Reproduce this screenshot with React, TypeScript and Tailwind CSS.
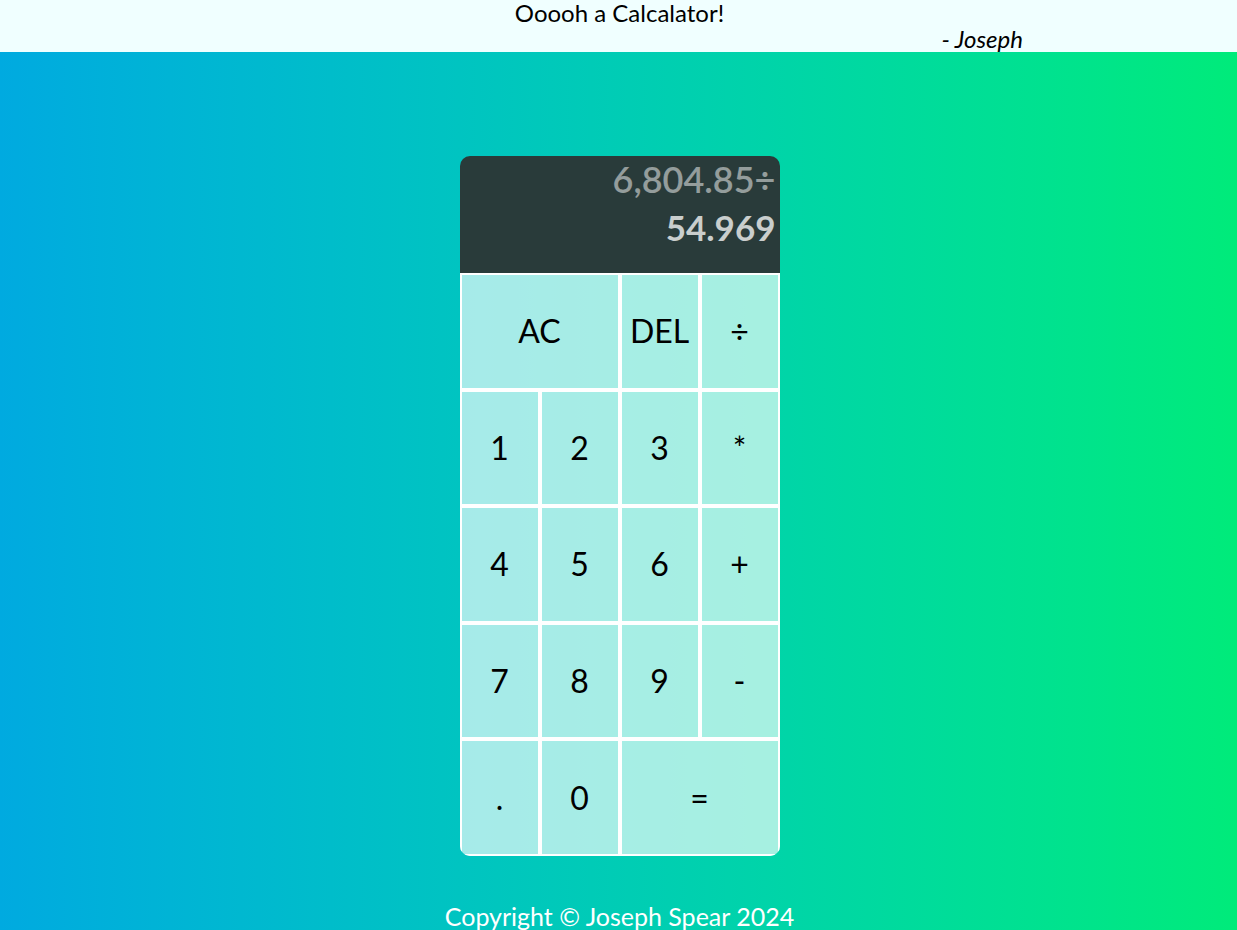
const keys: { label: string; span?: boolean }[] = [
  { label: "AC", span: true },
  { label: "DEL" },
  { label: "÷" },
  { label: "1" },
  { label: "2" },
  { label: "3" },
  { label: "*" },
  { label: "4" },
  { label: "5" },
  { label: "6" },
  { label: "+" },
  { label: "7" },
  { label: "8" },
  { label: "9" },
  { label: "-" },
  { label: "." },
  { label: "0" },
  { label: "=", span: true },
];

export default function App() {
  return (
    <div
      className="min-h-screen flex flex-col bg-gradient-to-r from-[#00aae0] to-[#00eb7a] overflow-hidden"
      style={{ fontFamily: "Lato, 'Noto Sans', sans-serif" }}
    >
      {/* Header */}
      <header className="h-[52px] bg-[#f0ffff] text-black text-[24px] leading-[26px]">
        <div className="text-center pl-[2px]">Ooooh a Calcalator!</div>
        <div className="text-right italic pr-[214px]">- Joseph</div>
      </header>

      {/* Calculator */}
      <main className="flex justify-center pt-[104px] pl-[2px]">
        <div className="grid grid-cols-[repeat(4,80px)] grid-rows-[117px_repeat(5,116.6px)] rounded-[10px] overflow-hidden">
          <div className="col-span-4 bg-[#293b3a] flex flex-col items-end justify-start pr-[4px] pt-[2px]">
            <div className="text-[36px] leading-[42px] text-white/50 font-semibold">6,804.85÷</div>
            <div className="text-[35px] leading-[55px] text-white/75 font-bold">54.969</div>
          </div>
          {keys.map((k) => (
            <button
              key={k.label}
              className={`${k.span ? "col-span-2" : ""} border-2 border-white bg-white/65 text-black text-[32px] flex items-center justify-center`}
            >
              {k.label}
            </button>
          ))}
        </div>
      </main>

      <footer className="mt-[46px] text-center text-white text-[25px] leading-[28px] pl-[2px]">
        Copyright © Joseph Spear 2024
      </footer>
    </div>
  );
}
